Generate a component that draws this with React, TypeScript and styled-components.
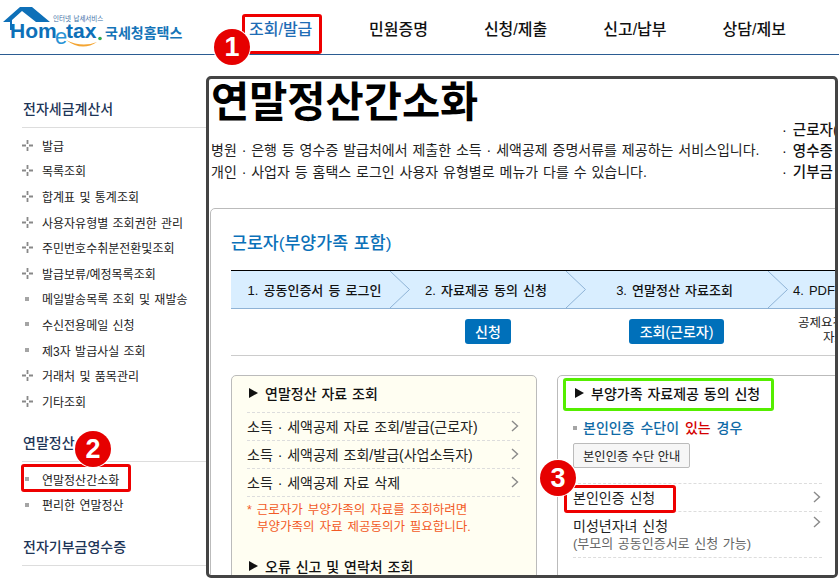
import React from "react";
import styled, { createGlobalStyle } from "styled-components";

const GlobalStyle = createGlobalStyle`
  html, body {
    margin: 0;
    padding: 0;
    background: #fff;
  }
  body {
    font-family: "Liberation Sans", "Noto Sans CJK KR", sans-serif;
    word-spacing: 1px;
    color: #111;
  }
  * {
    box-sizing: border-box;
  }
`;

const Page = styled.div`
  position: relative;
  width: 839px;
  height: 578px;
  overflow: hidden;
  background: #fff;
`;

const Header = styled.header`
  display: flex;
  align-items: flex-start;
  height: 55px;
  border-bottom: 1px solid #2b5c92;
`;

const LogoBox = styled.div`
  width: 249px;
  flex: none;
  height: 54px;
`;

const Nav = styled.nav`
  display: flex;
  gap: 56px;
`;

const NavItem = styled.a<{ $active?: boolean }>`
  display: block;
  height: 54px;
  min-width: ${(p) => (p.$active ? "64px" : "0")};
  padding-top: 19px;
  font-size: 16px;
  line-height: 22px;
  white-space: nowrap;
  font-weight: 500;
  color: ${(p) => (p.$active ? "#1f6db5" : "#111")};
  border-bottom: ${(p) => (p.$active ? "3px solid #3b70b2" : "none")};
`;

const Body = styled.div`
  display: flex;
  height: 523px;
`;

const Sidebar = styled.aside`
  width: 206px;
  flex: none;
  padding: 44px 0 0 22px;
`;

const SideTitle = styled.h3`
  margin: 0;
  padding: 0 0 8px 1px;
  height: 29px;
  font-size: 14px;
  line-height: 20px;
  font-weight: 500;
  color: #1d3557;
  border-bottom: 1px solid #ddd;
  white-space: nowrap;
`;

const SideList = styled.ul`
  list-style: none;
  margin: 4.5px 0 19px;
  padding: 0;
`;

const SideItem = styled.li`
  display: flex;
  align-items: center;
  height: 25.6px;
  font-size: 12px;
  color: #222;
  white-space: nowrap;
`;

const BulletSlot = styled.span`
  display: flex;
  align-items: center;
  justify-content: center;
  width: 20px;
  flex: none;
  padding-right: 10px;
  color: #888;

  svg {
    flex: none;
  }
`;

const Square = styled.i`
  display: block;
  width: 4px;
  height: 4px;
  flex: none;
  background: #a5a5a5;
`;

const Window = styled.main`
  width: 632px;
  height: 502px;
  margin-top: 21px;
  flex: none;
  border: 3px solid #444;
  border-radius: 5px;
  overflow: hidden;
  background: #fff;
`;

const Hero = styled.section`
  display: flex;
  height: 129px;
`;

const HeroLeft = styled.div`
  width: 573px;
  flex: none;
  padding-left: 2px;
`;

const HeroTitle = styled.h1`
  margin: 0;
  font-size: 41.5px;
  line-height: 48px;
  font-weight: 700;
  color: #000;
  white-space: nowrap;
`;

const HeroText = styled.p`
  margin: 0;
  font-size: 14px;
  line-height: 22px;
  white-space: nowrap;
  color: #222;
`;

const HeroLines = styled.div`
  margin-top: 12px;
`;

const HeroRight = styled.ul`
  list-style: none;
  margin: 0;
  padding: 41px 0 0;
`;

const HeroRightItem = styled.li`
  font-size: 14.5px;
  line-height: 21px;
  font-weight: 500;
  white-space: nowrap;
  word-spacing: 2px;
  color: #111;
`;

const Card = styled.section`
  width: 800px;
  height: 420px;
  margin-left: 1px;
  padding: 21px 20px 0;
  border: 1px solid #bbb;
  border-radius: 5px 0 0 0;
`;

const CardTitle = styled.h2`
  margin: 0 0 14px;
  font-size: 17.3px;
  line-height: 26px;
  font-weight: 500;
  color: #0b71b9;
`;

const StepGrid = styled.div<{ $bar?: boolean }>`
  display: grid;
  grid-template-columns: 159px 20px 156px 19px 183px 20px 200px;
  align-items: center;
  height: ${(p) => (p.$bar ? "39px" : "47px")};
  background: ${(p) => (p.$bar ? "#d9eeff" : "transparent")};
  border-top: ${(p) => (p.$bar ? "1px solid #000" : "none")};
  border-bottom: ${(p) => (p.$bar ? "1px solid #8fb3d6" : "1px solid #ccc")};
  padding: ${(p) => (p.$bar ? "0" : "4px 0 6px")};
`;

const Step = styled.div<{ $align?: "left" | "center"; $first?: boolean }>`
  font-size: 13px;
  font-weight: 500;
  word-spacing: 1.5px;
  color: #111;
  white-space: nowrap;
  text-align: ${(p) => p.$align ?? "center"};
  padding: ${(p) => (p.$align === "left" ? "0 0 0 5px" : p.$first ? "0 0 0 8px" : "0 4px 0 0")};
`;

const ChevronSvg = styled.svg`
  display: block;
  width: 20px;
  height: 37px;
`;

const ActionCell = styled.div`
  display: flex;
  justify-content: center;
`;

const BlueButton = styled.button`
  height: 25px;
  padding: 0 10.5px;
  border: none;
  border-radius: 3px;
  background: #0070ba;
  color: #fff;
  font: inherit;
  font-size: 14px;
  font-weight: 500;
  white-space: nowrap;
`;

const StepNote = styled.div`
  font-size: 12.5px;
  line-height: 15px;
  white-space: nowrap;
  padding-left: 10px;
  color: #222;
`;

const NoteLine = styled.div<{ $indent?: number }>`
  padding-left: ${(p) => p.$indent ?? 0}px;
`;

const Columns = styled.div`
  display: flex;
  gap: 20px;
  margin-top: 19px;
`;

const Panel = styled.div<{ $cream?: boolean }>`
  width: ${(p) => (p.$cream ? "306px" : "300px")};
  height: 300px;
  flex: none;
  padding: 6px 16px 0 15px;
  border: 1px solid #bbb;
  border-radius: 5px;
  background: ${(p) => (p.$cream ? "#fffef2" : "#fff")};
`;

const PanelTitle = styled.h4<{ $gap?: number }>`
  display: flex;
  align-items: center;
  gap: 7px;
  margin: ${(p) => p.$gap ?? 0}px 0 0;
  height: 21px;
  font-size: 14px;
  font-weight: 500;
  color: #111;
  white-space: nowrap;
`;

const Triangle = styled.i`
  display: block;
  width: 0;
  height: 0;
  margin-left: 2px;
  border-style: solid;
  border-width: 5px 0 5px 9px;
  border-color: transparent transparent transparent #111;
`;

const RowList = styled.div<{ $top: number; $width?: number }>`
  margin-top: ${(p) => p.$top}px;
  border-top: 1px dashed #ddd;
  width: ${(p) => (p.$width ? `${p.$width}px` : "auto")};
`;

const Row = styled.div<{ $tall?: boolean }>`
  display: flex;
  justify-content: space-between;
  align-items: ${(p) => (p.$tall ? "flex-start" : "center")};
  height: ${(p) => (p.$tall ? "46px" : "28px")};
  padding-top: ${(p) => (p.$tall ? "4px" : "0")};
  font-size: 14px;
  line-height: 20px;
  color: #222;
  white-space: nowrap;
  border-bottom: 1px dashed #ddd;
`;

const SubText = styled.div`
  font-size: 13px;
  line-height: 16px;
  color: #666;
`;

const ArrowSvg = styled.svg`
  display: block;
  width: 8px;
  height: 12px;
  margin: 0 1px 2px 0;
  flex: none;
`;

const Warn = styled.p`
  margin: 5px 0 0;
  font-size: 12.5px;
  line-height: 17px;
  word-spacing: 1.5px;
  color: #f25a26;
  white-space: nowrap;
`;

const AuthHead = styled.div`
  display: flex;
  align-items: center;
  gap: 6px;
  margin-top: 16px;
  font-size: 14px;
  line-height: 18px;
  word-spacing: 2px;
  color: #0f6aa6;
  font-weight: 500;
  white-space: nowrap;
`;

const Hot = styled.span`
  color: #d40000;
`;

const GreyButton = styled.button`
  display: block;
  height: 25px;
  margin-top: 6px;
  padding: 0 9px;
  border: 1px solid #bbb;
  border-radius: 2px;
  background: #f6f6f6;
  color: #222;
  font: inherit;
  font-size: 12.3px;
  white-space: nowrap;
`;

const Outline = styled.div<{ $x: number; $y: number; $w: number; $h: number; $color?: string }>`
  position: absolute;
  left: ${(p) => p.$x}px;
  top: ${(p) => p.$y}px;
  width: ${(p) => p.$w}px;
  height: ${(p) => p.$h}px;
  border: 3px solid ${(p) => p.$color ?? "#ee0000"};
  border-radius: 3px;
`;

const Badge = styled.div<{ $x: number; $y: number }>`
  position: absolute;
  left: ${(p) => p.$x - 18}px;
  top: ${(p) => p.$y - 18}px;
  display: flex;
  align-items: center;
  justify-content: center;
  width: 36px;
  height: 36px;
  border-radius: 50%;
  background: #e60000;
  box-shadow: 0 0 0 1px #fff;
  color: #fff;
  font-family: "Liberation Sans", sans-serif;
  font-size: 27px;
  font-weight: 700;
`;

const Chevron = () => (
  <ChevronSvg viewBox="0 0 20 37">
    <polyline points="0,0 19.5,18.5 0,37" fill="none" stroke="#8fb3d6" strokeWidth="1" />
  </ChevronSvg>
);

const Arrow = () => (
  <ArrowSvg viewBox="0 0 8 12">
    <polyline points="1,1 6.5,6 1,11" fill="none" stroke="#8a8a8a" strokeWidth="1.4" />
  </ArrowSvg>
);

const Cross = () => (
  <svg width="13" height="13" viewBox="0 0 13 13">
    <path d="M6.5 1v4M6.5 8v4M1 6.5h4M8 6.5h4" stroke="#888" strokeWidth="1.8" fill="none" />
  </svg>
);

const Logo = () => (
  <svg width="190" height="50" viewBox="0 0 190 50">
    <path d="M3 22 L20 7 H32 L50 22 H36 L22 11 L12 20 V30 H10 V22 Z" fill="#0e70b8" />
    <text x="53" y="20.5" fontSize="6.5" fill="#3a6ea5" fontFamily="Noto Sans CJK KR">인터넷 납세서비스</text>
    <text x="10" y="38" fontSize="21" fontWeight="700" fill="#0e70b8" fontFamily="Liberation Sans">Hom</text>
    <text x="55" y="44" fontSize="22" fill="#2a93d5" fontFamily="Liberation Sans">e</text>
    <text x="66" y="38" fontSize="21" fontWeight="700" fill="#0e70b8" fontFamily="Liberation Sans">tax</text>
    <circle cx="100" cy="38.5" r="1.8" fill="#2fa84f" />
    <path d="M66 40 Q82 52 97 42 Q82 48 66 40 Z" fill="#f4a533" />
    <text x="105" y="38" fontSize="14" fontWeight="700" fill="#1474b8" fontFamily="Noto Sans CJK KR">국세청홈택스</text>
  </svg>
);

const invoiceItems: { label: string; sub?: boolean }[] = [
  { label: "발급" },
  { label: "목록조회" },
  { label: "합계표 및 통계조회" },
  { label: "사용자유형별 조회권한 관리" },
  { label: "주민번호수취분전환및조회" },
  { label: "발급보류/예정목록조회" },
  { label: "메일발송목록 조회 및 재발송", sub: true },
  { label: "수신전용메일 신청", sub: true },
  { label: "제3자 발급사실 조회", sub: true },
  { label: "거래처 및 품목관리" },
  { label: "기타조회" },
];

const yearEndItems = ["연말정산간소화", "편리한 연말정산"];
const navItems = ["조회/발급", "민원증명", "신청/제출", "신고/납부", "상담/제보"];

export default function App() {
  return (
    <Page>
      <GlobalStyle />
      <Header>
        <LogoBox>
          <Logo />
        </LogoBox>
        <Nav>
          {navItems.map((item, i) => (
            <NavItem key={item} $active={i === 0}>
              {item}
            </NavItem>
          ))}
        </Nav>
      </Header>
      <Body>
        <Sidebar>
          <SideTitle>전자세금계산서</SideTitle>
          <SideList>
            {invoiceItems.map((item) => (
              <SideItem key={item.label}>
                <BulletSlot>{item.sub ? <Square /> : <Cross />}</BulletSlot>
                {item.label}
              </SideItem>
            ))}
          </SideList>
          <SideTitle>연말정산</SideTitle>
          <SideList>
            {yearEndItems.map((item) => (
              <SideItem key={item}>
                <BulletSlot>
                  <Square />
                </BulletSlot>
                {item}
              </SideItem>
            ))}
          </SideList>
          <SideTitle>전자기부금영수증</SideTitle>
        </Sidebar>
        <Window>
          <Hero>
            <HeroLeft>
              <HeroTitle>연말정산간소화</HeroTitle>
              <HeroLines>
                <HeroText>병원 · 은행 등 영수증 발급처에서 제출한 소득 · 세액공제 증명서류를 제공하는 서비스입니다.</HeroText>
                <HeroText>개인 · 사업자 등 홈택스 로그인 사용자 유형별로 메뉴가 다를 수 있습니다.</HeroText>
              </HeroLines>
            </HeroLeft>
            <HeroRight>
              <HeroRightItem>· 근로자(부양가족 포함)</HeroRightItem>
              <HeroRightItem>· 영수증 발급기관</HeroRightItem>
              <HeroRightItem>· 기부금 단체</HeroRightItem>
            </HeroRight>
          </Hero>
          <Card>
            <CardTitle>근로자(부양가족 포함)</CardTitle>
            <StepGrid $bar>
              <Step $first>1. 공동인증서 등 로그인</Step>
              <Chevron />
              <Step>2. 자료제공 동의 신청</Step>
              <Chevron />
              <Step>3. 연말정산 자료조회</Step>
              <Chevron />
              <Step $align="left">4. PDF 내려받기</Step>
            </StepGrid>
            <StepGrid>
              <div />
              <div />
              <ActionCell>
                <BlueButton>신청</BlueButton>
              </ActionCell>
              <div />
              <ActionCell>
                <BlueButton>조회(근로자)</BlueButton>
              </ActionCell>
              <div />
              <StepNote>
                <NoteLine>공제요건을 확인</NoteLine>
                <NoteLine $indent={25}>자료</NoteLine>
              </StepNote>
            </StepGrid>
            <Columns>
              <Panel $cream>
                <PanelTitle>
                  <Triangle />
                  연말정산 자료 조회
                </PanelTitle>
                <RowList $top={9}>
                  <Row>
                    소득 · 세액공제 자료 조회/발급(근로자)
                    <Arrow />
                  </Row>
                  <Row>
                    소득 · 세액공제 조회/발급(사업소득자)
                    <Arrow />
                  </Row>
                  <Row>
                    소득 · 세액공제 자료 삭제
                    <Arrow />
                  </Row>
                </RowList>
                <Warn>
                  * 근로자가 부양가족의 자료를 조회하려면
                  <br />
                  &nbsp;&nbsp;부양가족의 자료 제공동의가 필요합니다.
                </Warn>
                <PanelTitle $gap={19}>
                  <Triangle />
                  오류 신고 및 연락처 조회
                </PanelTitle>
              </Panel>
              <Panel>
                <PanelTitle $gap={0}>
                  <Triangle />
                  부양가족 자료제공 동의 신청
                </PanelTitle>
                <AuthHead>
                  <Square />
                  <span>
                    본인인증 수단이 <Hot>있는</Hot> 경우
                  </span>
                </AuthHead>
                <GreyButton>본인인증 수단 안내</GreyButton>
                <RowList $top={15} $width={249}>
                  <Row>
                    본인인증 신청
                    <Arrow />
                  </Row>
                  <Row $tall>
                    <div>
                      미성년자녀 신청
                      <SubText>(부모의 공동인증서로 신청 가능)</SubText>
                    </div>
                    <Arrow />
                  </Row>
                </RowList>
              </Panel>
            </Columns>
          </Card>
        </Window>
      </Body>

      <Outline $x={242} $y={14} $w={80} $h={40} />
      <Outline $x={21} $y={464} $w={110} $h={28} />
      <Outline $x={564} $y={485} $w={112} $h={28} />
      <Outline $x={563} $y={378} $w={211} $h={33} $color="#55ee00" />
      <Badge $x={232} $y={47}>1</Badge>
      <Badge $x={93} $y={449}>2</Badge>
      <Badge $x={558} $y={478}>3</Badge>
    </Page>
  );
}
